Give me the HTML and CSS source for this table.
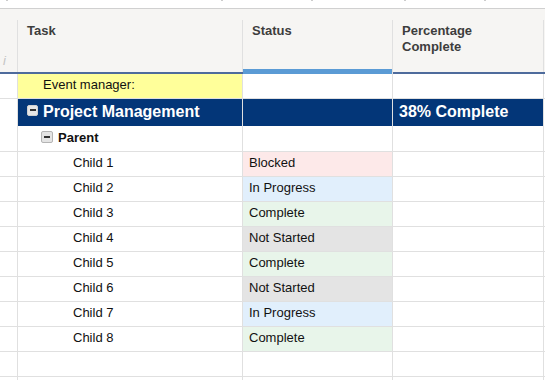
FILE: index.html
```html
<!DOCTYPE html>
<html>
<head>
<meta charset="utf-8">
<link rel="stylesheet" href="styles.css">
</head>
<body>
<div class="sheet">
  <div class="topbar">
    <span class="tick t1"></span><span class="tick t2"></span><span class="tick t3"></span><span class="tick t4"></span><span class="tick t5"></span>
  </div>
  <div class="head">
    <div class="hcell gut"><span class="info">i</span></div>
    <div class="hcell task">Task</div>
    <div class="hcell status">Status</div>
    <div class="hcell pct">Percentage<br>Complete</div>
    <div class="hfill"></div>
  </div>

  <div class="row event">
    <div class="cell gut"></div><div class="cell task">Event manager:</div><div class="cell status"></div><div class="cell pct"></div><div class="fill"></div>
  </div>
  <div class="row proj">
    <div class="cell gut"></div>
    <div class="cell task"><span class="toggle big"></span>Project Management</div>
    <div class="cell status"></div>
    <div class="cell pct">38% Complete</div>
    <div class="fill"></div>
  </div>
  <div class="row parent">
    <div class="cell gut"></div>
    <div class="cell task"><span class="toggle"></span>Parent</div>
    <div class="cell status"></div><div class="cell pct"></div><div class="fill"></div>
  </div>
  <div class="row child">
    <div class="cell gut"></div><div class="cell task">Child 1</div><div class="cell status blocked">Blocked</div><div class="cell pct"></div><div class="fill"></div>
  </div>
  <div class="row child">
    <div class="cell gut"></div><div class="cell task">Child 2</div><div class="cell status progress">In Progress</div><div class="cell pct"></div><div class="fill"></div>
  </div>
  <div class="row child">
    <div class="cell gut"></div><div class="cell task">Child 3</div><div class="cell status complete">Complete</div><div class="cell pct"></div><div class="fill"></div>
  </div>
  <div class="row child">
    <div class="cell gut"></div><div class="cell task">Child 4</div><div class="cell status notstarted">Not Started</div><div class="cell pct"></div><div class="fill"></div>
  </div>
  <div class="row child">
    <div class="cell gut"></div><div class="cell task">Child 5</div><div class="cell status complete">Complete</div><div class="cell pct"></div><div class="fill"></div>
  </div>
  <div class="row child">
    <div class="cell gut"></div><div class="cell task">Child 6</div><div class="cell status notstarted">Not Started</div><div class="cell pct"></div><div class="fill"></div>
  </div>
  <div class="row child">
    <div class="cell gut"></div><div class="cell task">Child 7</div><div class="cell status progress">In Progress</div><div class="cell pct"></div><div class="fill"></div>
  </div>
  <div class="row child">
    <div class="cell gut"></div><div class="cell task">Child 8</div><div class="cell status complete">Complete</div><div class="cell pct"></div><div class="fill"></div>
  </div>
  <div class="row">
    <div class="cell gut"></div><div class="cell task"></div><div class="cell status"></div><div class="cell pct"></div><div class="fill"></div>
  </div>
  <div class="row">
    <div class="cell gut"></div><div class="cell task"></div><div class="cell status"></div><div class="cell pct"></div><div class="fill"></div>
  </div>
</div>
</body>
</html>
```
FILE: styles.css
```css
html, body {
  margin: 0;
  padding: 0;
  background: #ffffff;
}
body {
  font-family: "Liberation Sans", Arial, sans-serif;
  font-size: 13px;
  color: #111111;
}
.sheet {
  width: 545px;
  height: 380px;
  overflow: hidden;
}
.topbar {
  height: 8px;
  border-bottom: 1px solid #d0d0d0;
  display: flex;
  align-items: flex-start;
}
.tick {
  width: 2px;
  height: 1px;
  background: #cccccc;
}
.t1 { margin-left: 6px; }
.t2 { margin-left: 213px; }
.t3 { margin-left: 88px; }
.t4 { margin-left: 91px; }
.t5 { margin-left: 78px; }

.head {
  display: flex;
  background: #f6f5f3;
  padding-top: 11px;
  border-bottom: 2px solid #4e6b9c;
}
.hcell {
  box-sizing: border-box;
  height: 52px;
  border-right: 1px solid #e0e0e0;
  padding: 3px 9px 0;
  font-weight: bold;
  color: #3d3d3d;
  line-height: 16px;
  flex: none;
}
.hcell.gut {
  padding: 0 0 3px 3px;
  display: flex;
  align-items: flex-end;
}
.info {
  font-style: italic;
  font-weight: normal;
  color: #c4c4c4;
  font-size: 13px;
}
.hcell.status {
  margin-bottom: -2px;
  height: 54px;
  box-shadow: inset 0 -5px 0 #5b9bd5;
}
.hfill {
  flex: 1;
}

.gut { width: 18px; }
.task { width: 225px; }
.status { width: 150px; }
.pct { width: 151px; }

.row {
  display: flex;
  height: 25px;
  box-sizing: border-box;
  border-bottom: 1px solid #e0e0e0;
}
.cell {
  box-sizing: border-box;
  border-right: 1px solid #e0e0e0;
  display: flex;
  align-items: center;
  flex: none;
  white-space: nowrap;
  padding-bottom: 4px;
}
.fill {
  flex: 1;
}
.cell.status {
  padding-left: 6px;
}

.event .cell {
  padding-bottom: 3px;
}
.event .task {
  background: #ffff9a;
  padding-left: 25px;
}

.proj {
  height: 27px;
  border-bottom: none;
}
.proj .cell {
  padding-bottom: 2px;
}
.proj .task,
.proj .status,
.proj .pct {
  background: #033678;
  color: #ffffff;
  font-weight: bold;
  font-size: 16px;
}
.proj .task {
  padding-left: 9px;
}
.proj .pct {
  padding-left: 6px;
}

.parent {
  height: 26px;
}
.parent .cell {
  padding-bottom: 3px;
}
.parent .task {
  padding-left: 23px;
  font-weight: bold;
}

.child .task {
  padding-left: 55px;
}

.toggle {
  width: 11px;
  height: 11px;
  box-sizing: border-box;
  border: 1px solid #b4b4b4;
  border-radius: 2px;
  background: #e4e4e4;
  display: flex;
  align-items: center;
  justify-content: center;
  margin-right: 5px;
  flex: none;
}
.toggle::before {
  content: "";
  width: 6px;
  height: 2px;
  background: #333333;
}
.toggle.big {
  background: #e6e6e6;
  border-color: #d0d0d0;
  margin-bottom: 3px;
}
.parent .toggle {
  width: 12px;
  height: 12px;
}

.blocked { background: #fde9e9; }
.progress { background: #e1effc; }
.complete { background: #e8f5ea; }
.notstarted { background: #e4e4e4; }
```
